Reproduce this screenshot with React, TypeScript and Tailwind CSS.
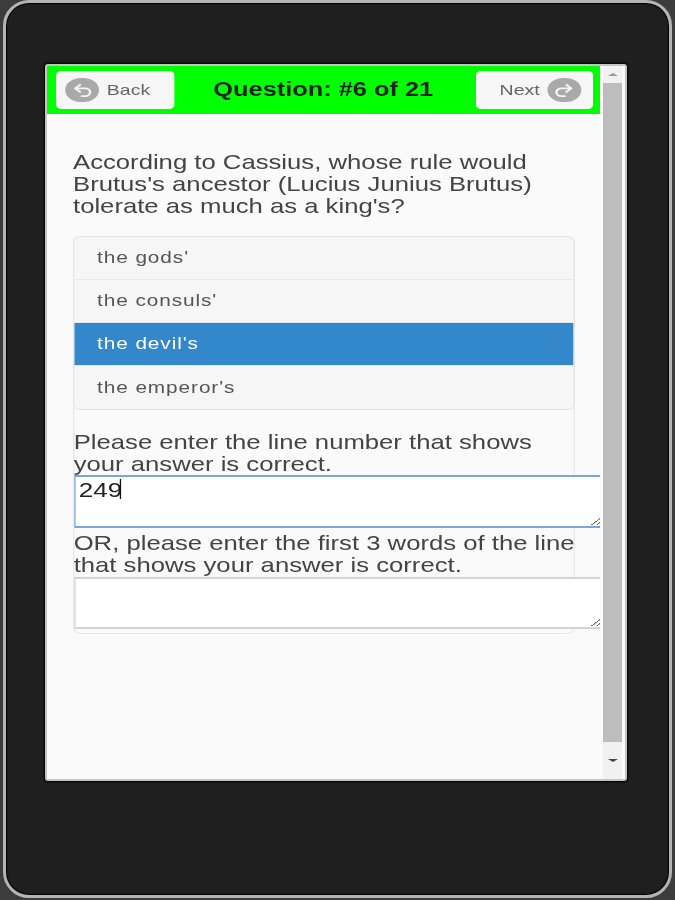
import React from 'react';
import { Undo2, Redo2 } from 'lucide-react';

const options = ['the gods\'', 'the consuls\'', 'the devil\'s', 'the emperor\'s'];
const selected = 2;

export default function App() {
  return (
    <div className="w-[675px] h-[900px] bg-[#3c3c3c] overflow-hidden font-['Liberation_Sans',Arial,sans-serif]">
      {/* tablet frame */}
      <div className="w-[669px] h-[898px] ml-[3px] rounded-[26px] border-[3px] border-[#b4b4b4] bg-[#1f1f1f] shadow-[inset_0_0_1px_1px_#000] pt-[61px] pl-[39px] blur-[0.5px]">
        {/* screen */}
        <div className="w-[582px] h-[717px] flex bg-[#fafafa] border-2 border-[#c4c4c4] rounded-[3px] shadow-[0_0_2px_1px_#000] overflow-hidden">
          <div className="w-[553px] shrink-0 overflow-hidden">
            {/* the page is stretched sideways in the picture */}
            <div className="w-[426px] origin-top-left scale-x-[1.3] text-[#333]">
              <div className="h-[48px] bg-[#00ff00] flex items-center justify-between pl-[7px] pr-[6px]">
                <button className="w-[91px] h-[38px] bg-[#f6f6f6] rounded-[4px] flex items-center pl-[7px] gap-[6px] text-[15px] text-[#666]">
                  <span className="w-[26px] h-[24px] rounded-full bg-[#a9a9a9] flex items-center justify-center">
                    <Undo2 className="w-[17px] h-[17px] text-[#f4f4f4]" strokeWidth={2.6} />
                  </span>
                  Back
                </button>
                <span className="mr-[3px] font-bold text-[#222] text-[19.5px]">Question: #6 of 21</span>
                <button className="w-[90px] h-[38px] bg-[#f6f6f6] rounded-[4px] flex items-center justify-end pr-[9px] gap-[6px] text-[15px] text-[#666]">
                  Next
                  <span className="w-[26px] h-[24px] rounded-full bg-[#a9a9a9] flex items-center justify-center">
                    <Redo2 className="w-[17px] h-[17px] text-[#f4f4f4]" strokeWidth={2.6} />
                  </span>
                </button>
              </div>

              <div className="pt-[37px] pl-[20px]">
                <p className="w-[385px] text-[19.75px] leading-[22px] text-[#444]">
                  According to Cassius, whose rule would Brutus's ancestor (Lucius Junius Brutus) tolerate as much as a king's?
                </p>

                <div className="w-[386px] h-[398px] mt-[19px] -ml-[0.5px] border border-[#e8e8e8] rounded-[6px]">
                  <div className="border border-[#e4e4e4] rounded-[6px] overflow-hidden -m-px">
                    {options.map((opt, i) => (
                      <div
                        key={opt}
                        className={`h-[43px] flex items-center pl-[18px] text-[16px] tracking-[0.7px] border-b border-[#e8e8e8] last:border-b-0 ${
                          i === selected ? 'bg-[#3388cc] text-white' : 'bg-[#f6f6f6] text-[#555]'
                        }`}
                      >
                        {opt}
                      </div>
                    ))}
                  </div>

                  <p className="w-[390px] mt-[22px] text-[19.75px] leading-[22px] text-[#444]">
                    Please enter the line number that shows your answer is correct.
                  </p>
                  <div className="relative w-[405px] h-[53px]">
                    <textarea
                      readOnly
                      value="249"
                      className="block w-[407px] h-[53px] bg-white border-y-2 border-x-[1.5px] border-[#7aa5e0] px-[3px] py-0 text-[20px] leading-[26px] text-[#222] outline-none"
                    />
                    <span className="absolute left-[35px] top-[4px] w-px h-[20px] bg-[#111]" />
                  </div>
                  <p className="w-[390px] mt-[4px] text-[19.75px] leading-[22px] text-[#444]">
                    OR, please enter the first 3 words of the line that shows your answer is correct.
                  </p>
                  <textarea
                    readOnly
                    className="block mt-[1px] w-[407px] h-[52px] bg-white border-y-2 border-x-[1.5px] border-[#d4d4d4] outline-none"
                  />
                </div>
              </div>
            </div>
          </div>

          {/* scrollbar */}
          <div className="w-[19px] ml-[3px] flex flex-col items-center bg-[#f1f1f1]">
            <div className="h-[17px] flex items-center justify-center">
              <div className="w-0 h-0 border-x-[5px] border-x-transparent border-b-[3px] border-b-[#999]" />
            </div>
            <div className="w-full h-[659px] bg-[#bdbdbd]" />
            <div className="flex-1 flex items-center justify-center">
              <div className="w-0 h-0 border-x-[5px] border-x-transparent border-t-[3px] border-t-[#444]" />
            </div>
          </div>
        </div>
      </div>
    </div>
  );
}
